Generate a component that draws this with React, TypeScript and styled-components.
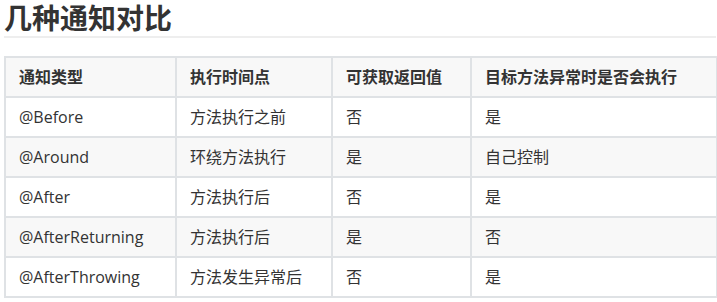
import * as React from 'react';
import styled, { createGlobalStyle } from 'styled-components';

const GlobalStyle = createGlobalStyle`
    html, body {
        margin: 0;
        padding: 0;
        background: #fff;
    }
    body {
        font-family: "Open Sans", "Noto Sans CJK SC", sans-serif;
        color: #333;
    }
`;

const Page = styled.div`
    padding: 0 1px 0 4px;
`;

const Heading = styled.h2`
    margin: 0;
    padding: 4px 0 3px;
    font-size: 28px;
    line-height: 29px;
    font-weight: 700;
    border-bottom: 2px solid #eee;
`;

const Table = styled.table`
    margin-top: 18px;
    border-collapse: collapse;
    width: 712px;
    font-size: 16px;
    table-layout: fixed;
`;

const HeadCell = styled.th`
    box-sizing: border-box;
    text-align: left;
    font-weight: 700;
    padding: 7px 13px;
    line-height: 24px;
    border: 2px solid #dfe2e5;
    background: #f8f8f8;
    white-space: nowrap;
`;

const Row = styled.tr`
    &:nth-child(2n) {
        background: #f8f8f8;
    }
`;

const Cell = styled.td`
    box-sizing: border-box;
    padding: 7px 13px;
    line-height: 24px;
    border: 2px solid #dfe2e5;
    white-space: nowrap;
`;

const columns = [
    { title: '通知类型', width: 171 },
    { title: '执行时间点', width: 156 },
    { title: '可获取返回值', width: 139 },
    { title: '目标方法异常时是否会执行', width: 246 }
];

const rows = [
    ['@Before', '方法执行之前', '否', '是'],
    ['@Around', '环绕方法执行', '是', '自己控制'],
    ['@After', '方法执行后', '否', '是'],
    ['@AfterReturning', '方法执行后', '是', '否'],
    ['@AfterThrowing', '方法发生异常后', '否', '是']
];

export default function App() {
    return (
        <Page>
            <GlobalStyle />
            <Heading>几种通知对比</Heading>
            <Table>
                <colgroup>
                    {columns.map(col => (
                        <col key={col.title} style={{ width: col.width }} />
                    ))}
                </colgroup>
                <thead>
                    <tr>
                        {columns.map(col => (
                            <HeadCell key={col.title}>{col.title}</HeadCell>
                        ))}
                    </tr>
                </thead>
                <tbody>
                    {rows.map(row => (
                        <Row key={row[0]}>
                            {row.map((value, i) => (
                                <Cell key={i}>{value}</Cell>
                            ))}
                        </Row>
                    ))}
                </tbody>
            </Table>
        </Page>
    );
}
